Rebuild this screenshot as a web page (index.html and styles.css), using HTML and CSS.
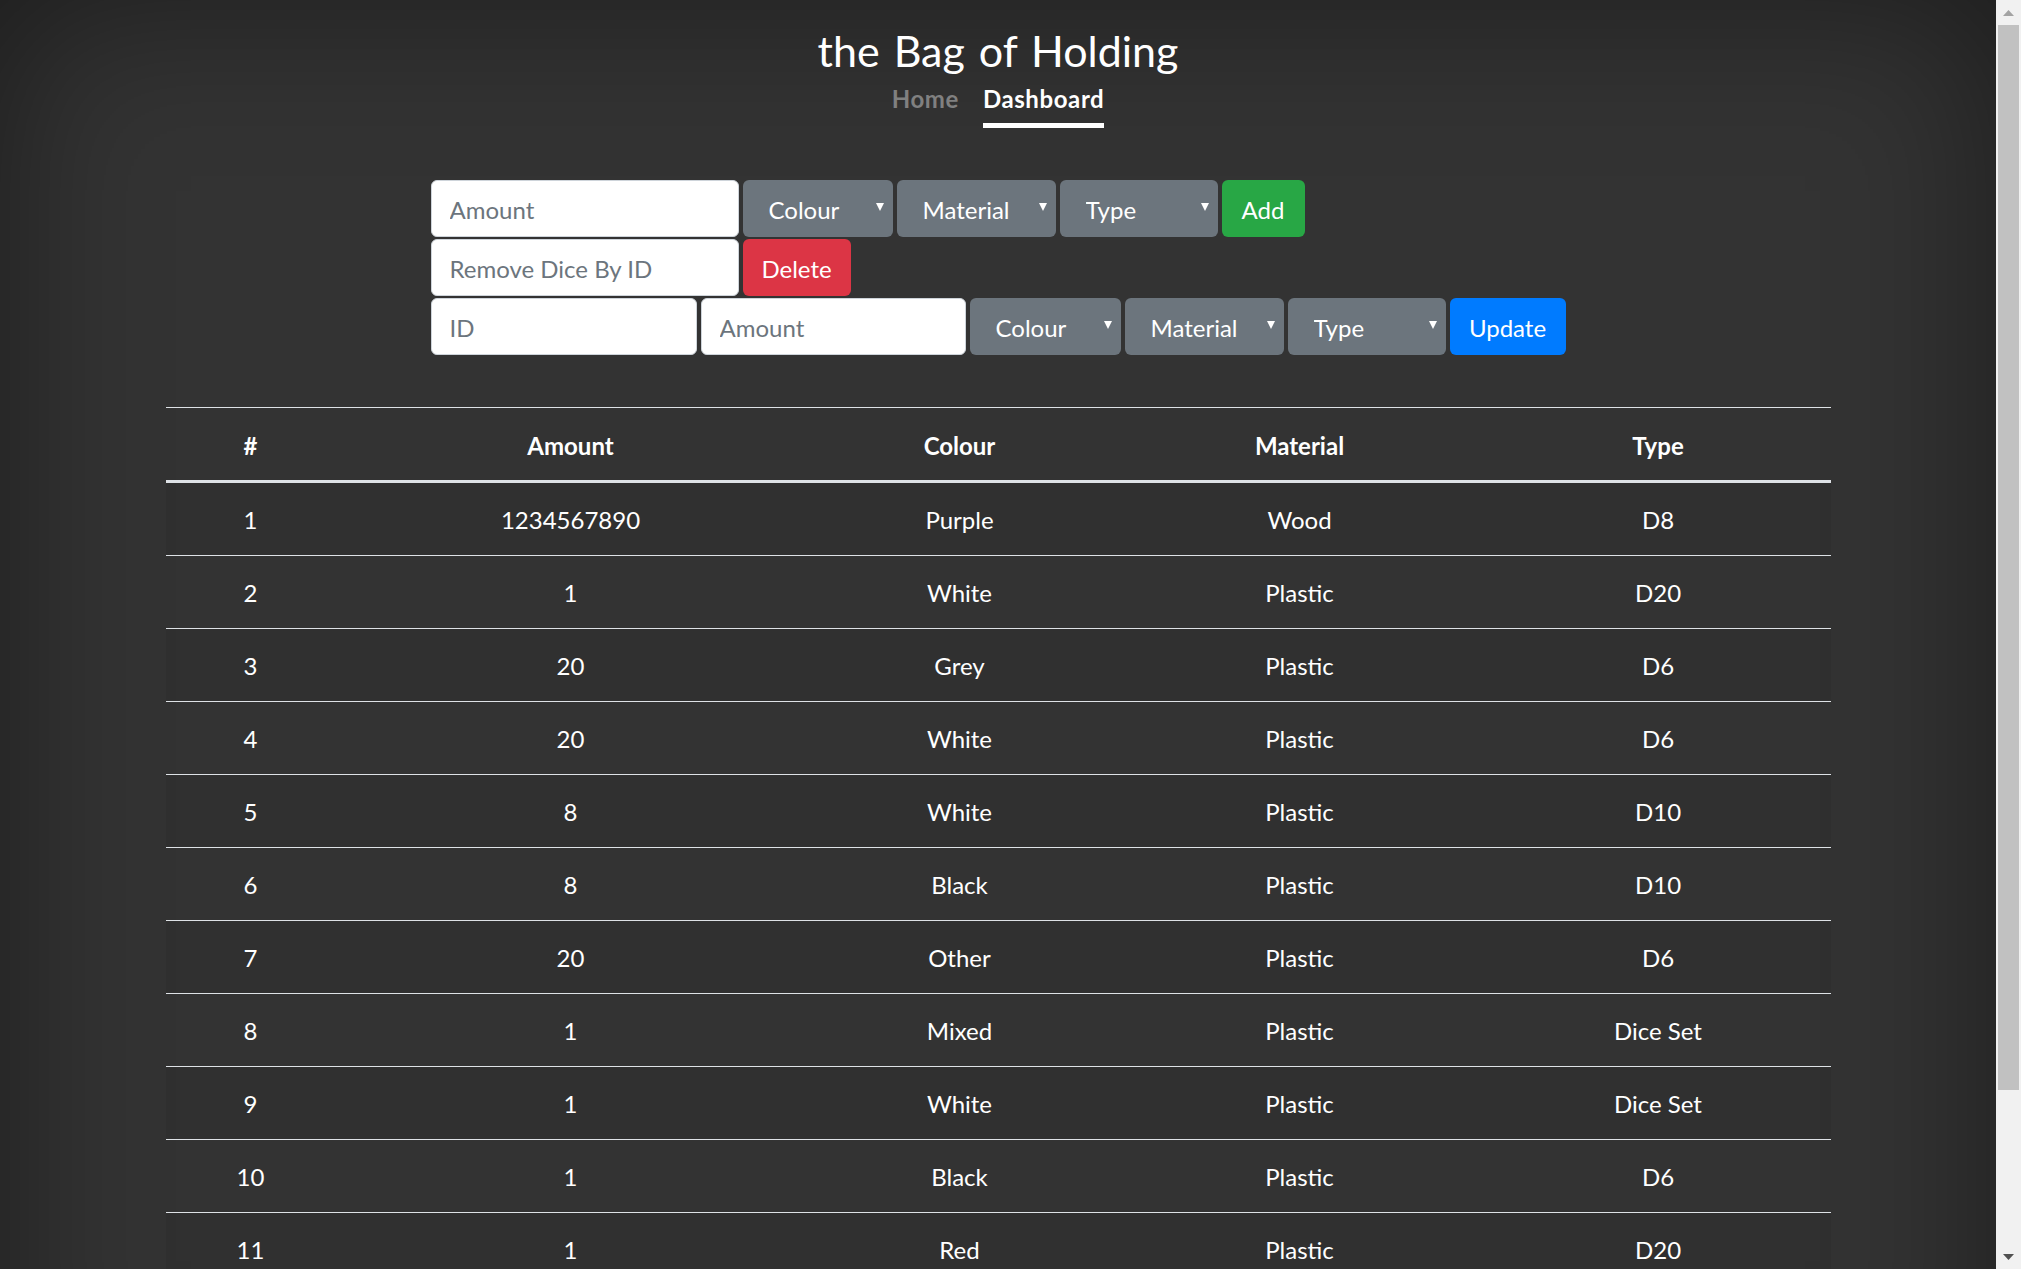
FILE: index.html
```html
<!DOCTYPE html>
<html lang="en">
<head>
<meta charset="utf-8">
<title>the Bag of Holding</title>
<link rel="stylesheet" href="styles.css">
</head>
<body>
<div class="window">
  <div class="viewport">
    <div class="page">
      <header class="masthead">
        <h1 class="brand">the Bag of Holding</h1>
        <nav class="nav">
          <a class="nav-link" href="#">Home</a>
          <a class="nav-link active" href="#">Dashboard</a>
        </nav>
      </header>

      <main class="container">
        <section class="forms">
          <form class="form-row">
            <input class="field w-amount" type="text" placeholder="Amount">
            <div class="select-wrap w-colour"><select class="pick"><option>Colour</option></select></div>
            <div class="select-wrap w-material"><select class="pick"><option>Material</option></select></div>
            <div class="select-wrap w-type"><select class="pick"><option>Type</option></select></div>
            <button class="btn btn-add" type="button">Add</button>
          </form>
          <form class="form-row">
            <input class="field w-amount" type="text" placeholder="Remove Dice By ID">
            <button class="btn btn-delete" type="button">Delete</button>
          </form>
          <form class="form-row">
            <input class="field w-id" type="text" placeholder="ID">
            <input class="field w-amount2" type="text" placeholder="Amount">
            <div class="select-wrap w-colour2"><select class="pick"><option>Colour</option></select></div>
            <div class="select-wrap w-material"><select class="pick"><option>Material</option></select></div>
            <div class="select-wrap w-type"><select class="pick"><option>Type</option></select></div>
            <button class="btn btn-update" type="button">Update</button>
          </form>
        </section>

        <table class="dice-table">
          <colgroup>
            <col class="c-id"><col class="c-amount"><col class="c-colour"><col class="c-material"><col class="c-type">
          </colgroup>
          <thead>
            <tr><th>#</th><th>Amount</th><th>Colour</th><th>Material</th><th>Type</th></tr>
          </thead>
          <tbody>
            <tr><td>1</td><td>1234567890</td><td>Purple</td><td>Wood</td><td>D8</td></tr>
            <tr><td>2</td><td>1</td><td>White</td><td>Plastic</td><td>D20</td></tr>
            <tr><td>3</td><td>20</td><td>Grey</td><td>Plastic</td><td>D6</td></tr>
            <tr><td>4</td><td>20</td><td>White</td><td>Plastic</td><td>D6</td></tr>
            <tr><td>5</td><td>8</td><td>White</td><td>Plastic</td><td>D10</td></tr>
            <tr><td>6</td><td>8</td><td>Black</td><td>Plastic</td><td>D10</td></tr>
            <tr><td>7</td><td>20</td><td>Other</td><td>Plastic</td><td>D6</td></tr>
            <tr><td>8</td><td>1</td><td>Mixed</td><td>Plastic</td><td>Dice Set</td></tr>
            <tr><td>9</td><td>1</td><td>White</td><td>Plastic</td><td>Dice Set</td></tr>
            <tr><td>10</td><td>1</td><td>Black</td><td>Plastic</td><td>D6</td></tr>
            <tr><td>11</td><td>1</td><td>Red</td><td>Plastic</td><td>D20</td></tr>
          </tbody>
        </table>
      </main>
    </div>
  </div>

  <div class="scrollbar" aria-hidden="true">
    <div class="sb-button">
      <svg class="sb-arrow" width="11" height="6" viewBox="0 0 11 6"><polygon points="5.5,0 11,6 0,6" fill="#a3a3a3"/></svg>
    </div>
    <div class="sb-thumb"></div>
    <div class="sb-rest"></div>
    <div class="sb-button">
      <svg class="sb-arrow" width="11" height="6" viewBox="0 0 11 6"><polygon points="0,0 11,0 5.5,6" fill="#505050"/></svg>
    </div>
  </div>
</div>
</body>
</html>
```

FILE: styles.css
```css
html,
body {
  margin: 0;
  height: 100%;
}

body {
  background: #333333;
  color: #ffffff;
  font-family: Lato, "Noto Sans", "Liberation Sans", sans-serif;
  font-size: 24px;
  line-height: 1.5;
}

/* Window frame: page viewport + vertical scrollbar */
.window {
  display: flex;
  height: 100vh;
  overflow: hidden;
}

.viewport {
  flex: 1;
  min-width: 0;
  overflow: hidden;
}

.scrollbar {
  width: 25px;
  flex: none;
  display: flex;
  flex-direction: column;
  background: #f1f1f1;
}

.sb-button {
  height: 25px;
  flex: none;
  display: flex;
  align-items: center;
  justify-content: center;
}

.sb-arrow {
  display: block;
}

.sb-thumb {
  height: 1065px;
  flex: none;
  margin: 0 2px;
  background: #c1c1c1;
}

.sb-rest {
  flex: 1;
}

/* Page */
.page {
  min-height: 1452px;
  box-sizing: border-box;
  padding-bottom: 166px;
  box-shadow: inset 0 0 160px rgba(0, 0, 0, 0.45);
}

/* Header */
.masthead {
  padding-top: 26px;
  display: flex;
  flex-direction: column;
  align-items: center;
}

.brand {
  margin: 0;
  font-size: 43px;
  font-weight: 400;
  line-height: 50px;
  word-spacing: 3px;
  color: #ffffff;
}

.nav {
  margin-top: 5px;
  display: flex;
  gap: 24px;
}

.nav-link {
  font-weight: 700;
  line-height: 36px;
  letter-spacing: 0.6px;
  padding-bottom: 6px;
  border-bottom: 5px solid transparent;
  color: #808080;
  text-decoration: none;
}

.nav-link.active {
  color: #ffffff;
  border-bottom-color: #ffffff;
}

/* Container */
.container {
  width: 1665px;
  margin: 0 auto;
}

.forms {
  margin-top: 52px;
  margin-left: 265px;
  display: flex;
  flex-direction: column;
  gap: 2px;
}

.form-row {
  display: flex;
  gap: 4px;
  margin: 0;
}

.field {
  box-sizing: border-box;
  height: 57px;
  margin: 0;
  padding: 2px 18px 0;
  border: 1.5px solid #ced4da;
  border-radius: 6px;
  background: #ffffff;
  color: #495057;
  font-family: inherit;
  font-size: 24px;
}

.field::placeholder {
  color: #6c757d;
  opacity: 1;
}

.w-amount { width: 308px; }
.w-id { width: 266px; }
.w-amount2 { width: 265px; }
.w-colour { width: 150px; }
.w-colour2 { width: 151px; }
.w-material { width: 159px; }
.w-type { width: 158px; }

.select-wrap {
  position: relative;
  height: 57px;
}

.select-wrap::after {
  content: "";
  position: absolute;
  right: 9px;
  top: 23px;
  border-left: 4px solid transparent;
  border-right: 4px solid transparent;
  border-top: 8px solid #ffffff;
  pointer-events: none;
}

.pick {
  -webkit-appearance: none;
  appearance: none;
  box-sizing: border-box;
  width: 100%;
  height: 100%;
  margin: 0;
  padding: 2px 24px 0 26px;
  border: none;
  border-radius: 6px;
  background: #6c757d;
  color: #ffffff;
  font-family: inherit;
  font-size: 24px;
}

.btn {
  box-sizing: border-box;
  height: 57px;
  margin: 0;
  padding: 2px 0 0;
  border: none;
  border-radius: 6px;
  color: #ffffff;
  font-family: inherit;
  font-size: 24px;
  text-align: center;
}

.btn-add { width: 83px; background: #28a745; }
.btn-delete { width: 108px; background: #dc3545; }
.btn-update { width: 116px; background: #007bff; }

/* Table */
.dice-table {
  margin-top: 52px;
  width: 1665px;
  table-layout: fixed;
  border-collapse: collapse;
  color: #ffffff;
}

.c-id { width: 170px; }
.c-amount { width: 470px; }
.c-colour { width: 308px; }
.c-material { width: 372px; }
.c-type { width: 345px; }

.dice-table th,
.dice-table td {
  padding: 19px 18px 17px;
  line-height: 36px;
  text-align: center;
  border-top: 1px solid #dee2e6;
}

.dice-table th {
  padding-top: 20px;
  padding-bottom: 16px;
  font-weight: 700;
}

.dice-table thead th {
  border-bottom: 3px solid #dee2e6;
}

.dice-table tbody tr:nth-of-type(odd) {
  background: rgba(0, 0, 0, 0.05);
}
```
